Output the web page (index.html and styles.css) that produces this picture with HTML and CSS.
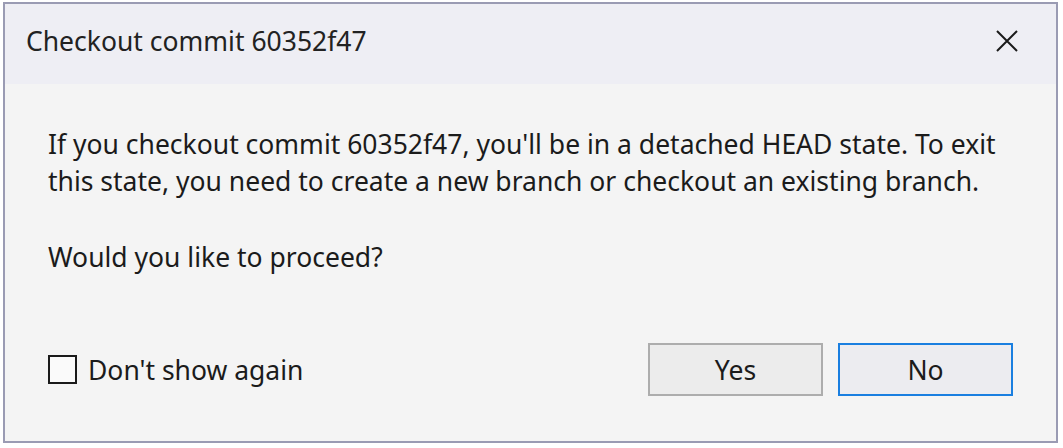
FILE: index.html
```html
<!DOCTYPE html>
<html>
<head>
<meta charset="utf-8">
<link rel="stylesheet" href="styles.css">
</head>
<body>
<div class="window">
  <div class="titlebar">
    <span class="title">Checkout commit 60352f47</span>
    <span class="close" aria-label="Close">
      <svg width="24" height="22" viewBox="0 0 24 22"><path d="M2 1 L22 21 M22 1 L2 21" stroke="#1a1a1a" stroke-width="2" fill="none"/></svg>
    </span>
  </div>
  <div class="content">
    <p class="msg">If you checkout commit 60352f47, you'll be in a detached HEAD state. To exit this state, you need to create a new branch or checkout an existing branch.</p>
    <p class="msg q">Would you like to proceed?</p>
    <div class="footer">
      <label class="check"><span class="box"></span>Don't show again</label>
      <div class="buttons">
        <button class="btn">Yes</button>
        <button class="btn primary">No</button>
      </div>
    </div>
  </div>
</div>
</body>
</html>
```

FILE: styles.css
```css
html, body {
  margin: 0;
  padding: 0;
  background: #ffffff;
}
body {
  padding: 2px 0 0 3px;
  font-family: "Noto Sans", "Open Sans", sans-serif;
  color: #1b1b1b;
}
.window {
  width: 1051px;
  height: 437px;
  border: 2px solid #9a9bb3;
  background: #f4f4f4;
  display: flex;
  flex-direction: column;
}
.titlebar {
  height: 80px;
  background: #eeeef4;
  display: flex;
  align-items: center;
  justify-content: space-between;
  padding: 0 37px 0 21px;
}
.title {
  font-size: 26.5px;
  color: #222;
  padding-bottom: 6px;
}
.close {
  display: flex;
  padding-bottom: 6px;
}
.content {
  flex: 1;
  display: flex;
  flex-direction: column;
  padding: 42px 43px 0 43px;
}
.msg {
  margin: 0;
  font-size: 26.5px;
  line-height: 37px;
}
.q {
  margin-top: 39px;
}
.footer {
  margin-top: 67px;
  display: flex;
  align-items: center;
  justify-content: space-between;
}
.check {
  display: flex;
  align-items: center;
  gap: 11px;
  font-size: 26.5px;
}
.box {
  width: 25px;
  height: 25px;
  border: 2px solid #1a1a1a;
  background: #fafafa;
}
.buttons {
  display: flex;
  gap: 15px;
}
.btn {
  width: 175px;
  height: 53px;
  font-family: inherit;
  font-size: 26.5px;
  color: #1b1b1b;
  background: #ececec;
  border: 2px solid #adadad;
  padding: 0;
}
.btn.primary {
  border-color: #1a7fe0;
  background: #ececf0;
}
```
